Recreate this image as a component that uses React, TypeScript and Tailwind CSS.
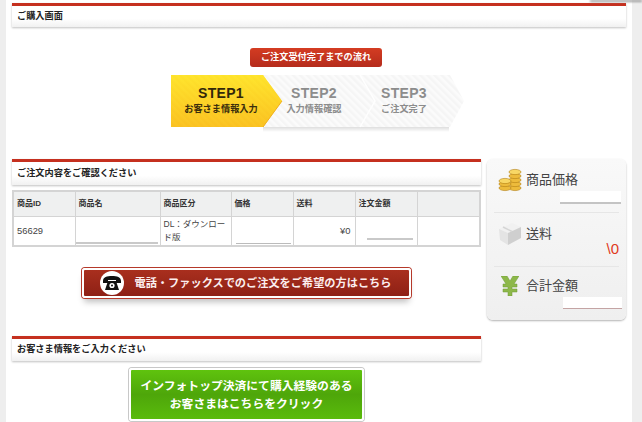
import React from "react";

const jp = "font-['Liberation_Sans','Noto_Sans_CJK_JP',sans-serif]";

const SectionBar = ({ title, height }: { title: string; height: string }) => (
  <div className={`${height} flex items-center border-t-[3px] border-[#c5301f] bg-gradient-to-b from-white from-60% to-[#f1f1f1] pl-[5px] shadow-[0_1px_2px_rgba(0,0,0,0.25)]`}>
    <span className="text-[9.2px] font-bold text-[#222]">{title}</span>
  </div>
);

const StepArrows = () => (
  <svg className="absolute left-0 top-0" width="300" height="60" viewBox="0 0 300 60">
    <defs>
      <pattern id="stripeY" width="5" height="5" patternUnits="userSpaceOnUse" patternTransform="rotate(-45)">
        <rect width="5" height="5" fill="#ffdc2e" />
        <rect width="2.5" height="5" fill="#fcd225" />
      </pattern>
      <pattern id="stripeG" width="5" height="5" patternUnits="userSpaceOnUse" patternTransform="rotate(-45)">
        <rect width="5" height="5" fill="#fbfbfb" />
        <rect width="2.5" height="5" fill="#f5f5f5" />
      </pattern>
      <linearGradient id="yel" x1="0" y1="0" x2="0" y2="1">
        <stop offset="0" stopColor="#ffe92e" stopOpacity="0.7" />
        <stop offset="1" stopColor="#f9b91f" stopOpacity="0.7" />
      </linearGradient>
      <linearGradient id="drop" x1="0" y1="0" x2="0" y2="1">
        <stop offset="0" stopColor="#000" stopOpacity="0.13" />
        <stop offset="1" stopColor="#000" stopOpacity="0" />
      </linearGradient>
    </defs>
    <rect x="92" y="52" width="186" height="5" fill="url(#drop)" />
    <path d="M180 0H279L293 26L279 52H180Z" fill="url(#stripeG)" />
    <path d="M90 0H189L204 26L189 52H90Z" fill="url(#stripeG)" />
    <path d="M189 0L204 26L189 52" fill="none" stroke="#fff" strokeWidth="1.5" />
    <path d="M0 0H92L111 26L92 52H0Z" fill="url(#stripeY)" />
    <path d="M0 0H92L111 26L92 52H0Z" fill="url(#yel)" />
    <path d="M92 52L111 26" stroke="#f0b020" strokeWidth="1" />
  </svg>
);

const Step = ({ label, sub, active, width }: { label: string; sub: string; active?: boolean; width: string }) => (
  <div className={`${width} flex flex-col items-center`}>
    <span className={`font-['Liberation_Sans'] text-[14px] font-bold leading-[17px] tracking-[0.3px] ${active ? "text-[#33280a]" : "text-[#8c8c8c]"}`}>{label}</span>
    <span className={`text-[9.2px] font-bold leading-[14px] ${active ? "text-[#3a2d0c]" : "text-[#8c8c8c]"}`}>{sub}</span>
  </div>
);

const Coins = () => (
  <svg width="24" height="24" viewBox="0 0 24 24">
    <g stroke="#b47f10" strokeWidth="0.6" fill="#edbb3c">
      <ellipse cx="17" cy="20" rx="6" ry="2.6" />
      <ellipse cx="17" cy="16" rx="6" ry="2.6" />
      <ellipse cx="17" cy="12" rx="6" ry="2.6" />
      <ellipse cx="17" cy="8" rx="6" ry="2.6" />
      <ellipse cx="17" cy="4" rx="6" ry="2.6" fill="#f8d765" />
      <ellipse cx="7" cy="20" rx="6" ry="2.6" />
      <ellipse cx="7" cy="16" rx="6" ry="2.6" />
      <ellipse cx="7" cy="13" rx="6" ry="2.6" fill="#f8d765" />
    </g>
  </svg>
);

const Box = () => (
  <svg width="24" height="24" viewBox="0 0 24 24">
    <path d="M1 7L14 1L23 5L10 11Z" fill="#f1f1f1" />
    <path d="M1 7L10 11V23L2 18Z" fill="#e4e4e4" />
    <path d="M10 11L23 5V16L10 23Z" fill="#cfcfcf" />
    <path d="M5 5L14 9.5" stroke="#d5d5d5" strokeWidth="1.5" />
  </svg>
);

const Yen = () => (
  <svg width="18" height="20" viewBox="0 0 18 20">
    <path d="M0 0H6L9 5L12 0H18L13 8H16V11H11V13H16V16H11V20H7V16H2V13H7V11H2V8H5Z" fill="#8db84a" stroke="#6f9a35" strokeWidth="0.5" />
  </svg>
);

const Phone = () => (
  <svg width="18" height="15" viewBox="0 0 18 15">
    <path d="M0 5C0 1 4 0 9 0S18 1 18 5V7H13V4H5V7H0Z" fill="#111" />
    <path d="M5 5H13L16 14H2Z" fill="#111" />
    <circle cx="9" cy="9.5" r="2.6" fill="#fff" />
    <circle cx="9" cy="9.5" r="1" fill="#111" />
  </svg>
);

const Masked = ({ className }: { className: string }) => (
  <div className={`${className} bg-white`} />
);

const th = "border-r border-[#d4d4d4] bg-[#eff0f0] pl-[3px] text-left text-[8px] font-bold text-[#333]";
const td = "border-r border-[#d4d4d4] align-middle text-[8.5px] text-[#444]";

const SideRow = ({ icon, title, iconBox, children, height }: { icon: React.ReactNode; title: string; iconBox: string; children: React.ReactNode; height: string }) => (
  <div className={`${height} flex flex-col border-b border-[#e6e6e6] last:border-b-0`}>
    <div className="flex items-center pt-[9px]">
      <div className={`${iconBox} flex justify-center`}>{icon}</div>
      <span className="text-[13px] text-[#444]">{title}</span>
    </div>
    {children}
  </div>
);

export default function App() {
  return (
    <div className={`relative h-[422px] w-[642px] overflow-hidden bg-[#eeeeee] ${jp}`}>
      <div className="absolute right-0 top-0 h-[2px] w-[52px] bg-[#999] blur-[1px]" />
      <div className="ml-[6px] h-full w-[626px] bg-white px-[6px] pt-[3px]">
        <SectionBar title="ご購入画面" height="h-[24px]" />

        <div className="mt-[21px] flex justify-center pr-[6px]">
          <div className="flex h-[19px] w-[132px] items-center justify-center rounded-[3px] bg-gradient-to-b from-[#d43c22] to-[#b52c1c] text-[9.2px] font-bold text-white">
            ご注文受付完了までの流れ
          </div>
        </div>

        <div className="relative ml-[159px] mt-[8px] h-[60px] w-[300px]">
          <StepArrows />
          <div className="relative flex pt-[10px]">
            <Step label="STEP1" sub="お客さま情報入力" active width="w-[100px]" />
            <Step label="STEP2" sub="入力情報確認" width="w-[86px]" />
            <Step label="STEP3" sub="ご注文完了" width="w-[78px] ml-[8px]" />
          </div>
        </div>

        <div className="mt-[24px] flex">
          <div className="w-[469px]">
            <SectionBar title="ご注文内容をご確認ください" height="h-[26px]" />

            <table className="mt-[5px] h-[57px] w-[469px] table-fixed border-collapse border-2 border-[#d4d4d4] bg-white">
              <colgroup>
                <col className="w-[62px]" />
                <col className="w-[85px]" />
                <col className="w-[71px]" />
                <col className="w-[62px]" />
                <col className="w-[62px]" />
                <col className="w-[62px]" />
                <col />
              </colgroup>
              <thead>
                <tr className="h-[25px] border-b border-[#d4d4d4]">
                  <th className={th}>商品ID</th>
                  <th className={th}>商品名</th>
                  <th className={th}>商品区分</th>
                  <th className={th}>価格</th>
                  <th className={th}>送料</th>
                  <th className={th}>注文金額</th>
                  <th className={th}></th>
                </tr>
              </thead>
              <tbody>
                <tr>
                  <td className={`${td} pl-[3px] text-[9.4px]`}>56629</td>
                  <td className={`${td} relative`}>
                    <div className="absolute bottom-[1px] left-0 right-[2px] h-[2px] bg-[#c9c9c9]" />
                  </td>
                  <td className={`${td} px-[3px] leading-[13px]`}>DL：ダウンロード版</td>
                  <td className={`${td} relative`}>
                    <div className="absolute bottom-[1px] left-[4px] right-[2px] h-[1px] bg-[#bbb]" />
                  </td>
                  <td className={`${td} pr-[4px] text-right text-[9.4px]`}>¥0</td>
                  <td className={`${td} relative`}>
                    <div className="absolute bottom-[5px] left-[11px] h-[1px] w-[46px] border-b-2 border-[#c9c9c9]" />
                  </td>
                  <td className={td}></td>
                </tr>
              </tbody>
            </table>

            <div className="mt-[21px] flex justify-center pr-[1px]">
              <div className="flex h-[30px] w-[329px] items-center rounded-[3px] border-2 border-white bg-gradient-to-b from-[#a92f1e] to-[#8e2015] pl-[16px] shadow-[0_0_0_1px_#b5392a,0_6px_6px_-2px_rgba(0,0,0,0.25)]">
                <div className="flex h-[24px] w-[24px] items-center justify-center rounded-full bg-white">
                  <Phone />
                </div>
                <span className="ml-[11px] text-[11.2px] font-bold text-[#fbeeee]">電話・ファックスでのご注文をご希望の方はこちら</span>
              </div>
            </div>

            <div className="mt-[38px]">
              <SectionBar title="お客さま情報をご入力ください" height="h-[25px]" />
            </div>

            <div className="mt-[7px] flex justify-center">
              <div className="flex h-[53px] w-[235px] flex-col items-center justify-center rounded-[3px] border-2 border-white bg-gradient-to-b from-[#5fc30e] via-[#4ea60a] to-[#5abb0c] text-[11.8px] font-bold leading-[18px] text-white shadow-[0_0_0_1px_#c8c8c8]">
                <span>インフォトップ決済にて購入経験のある</span>
                <span>お客さまはこちらをクリック</span>
              </div>
            </div>
          </div>

          <div className="ml-[6px] flex h-[161px] w-[139px] flex-col rounded-[6px] bg-gradient-to-b from-[#f9f9f9] to-[#efefef] px-[7px] shadow-[0_1px_2px_rgba(0,0,0,0.3)]">
            <SideRow icon={<Coins />} title="商品価格" iconBox="w-[32px]" height="h-[54px]">
              <Masked className="ml-[66px] mt-[-1px] h-[13px] w-[61px] border-b-2 border-[#c4c4c4]" />
            </SideRow>
            <SideRow icon={<Box />} title="送料" iconBox="w-[32px]" height="h-[54px]">
              <div className="mt-[-5px] text-right font-['Liberation_Sans'] text-[15px] leading-[15px] text-[#e03a20]">\0</div>
            </SideRow>
            <SideRow icon={<Yen />} title="合計金額" iconBox="w-[32px]" height="h-[53px]">
              <Masked className="ml-[69px] mt-[1px] h-[12px] w-[59px] border-b border-[#c4a4a4]" />
            </SideRow>
          </div>
        </div>
      </div>
    </div>
  );
}
